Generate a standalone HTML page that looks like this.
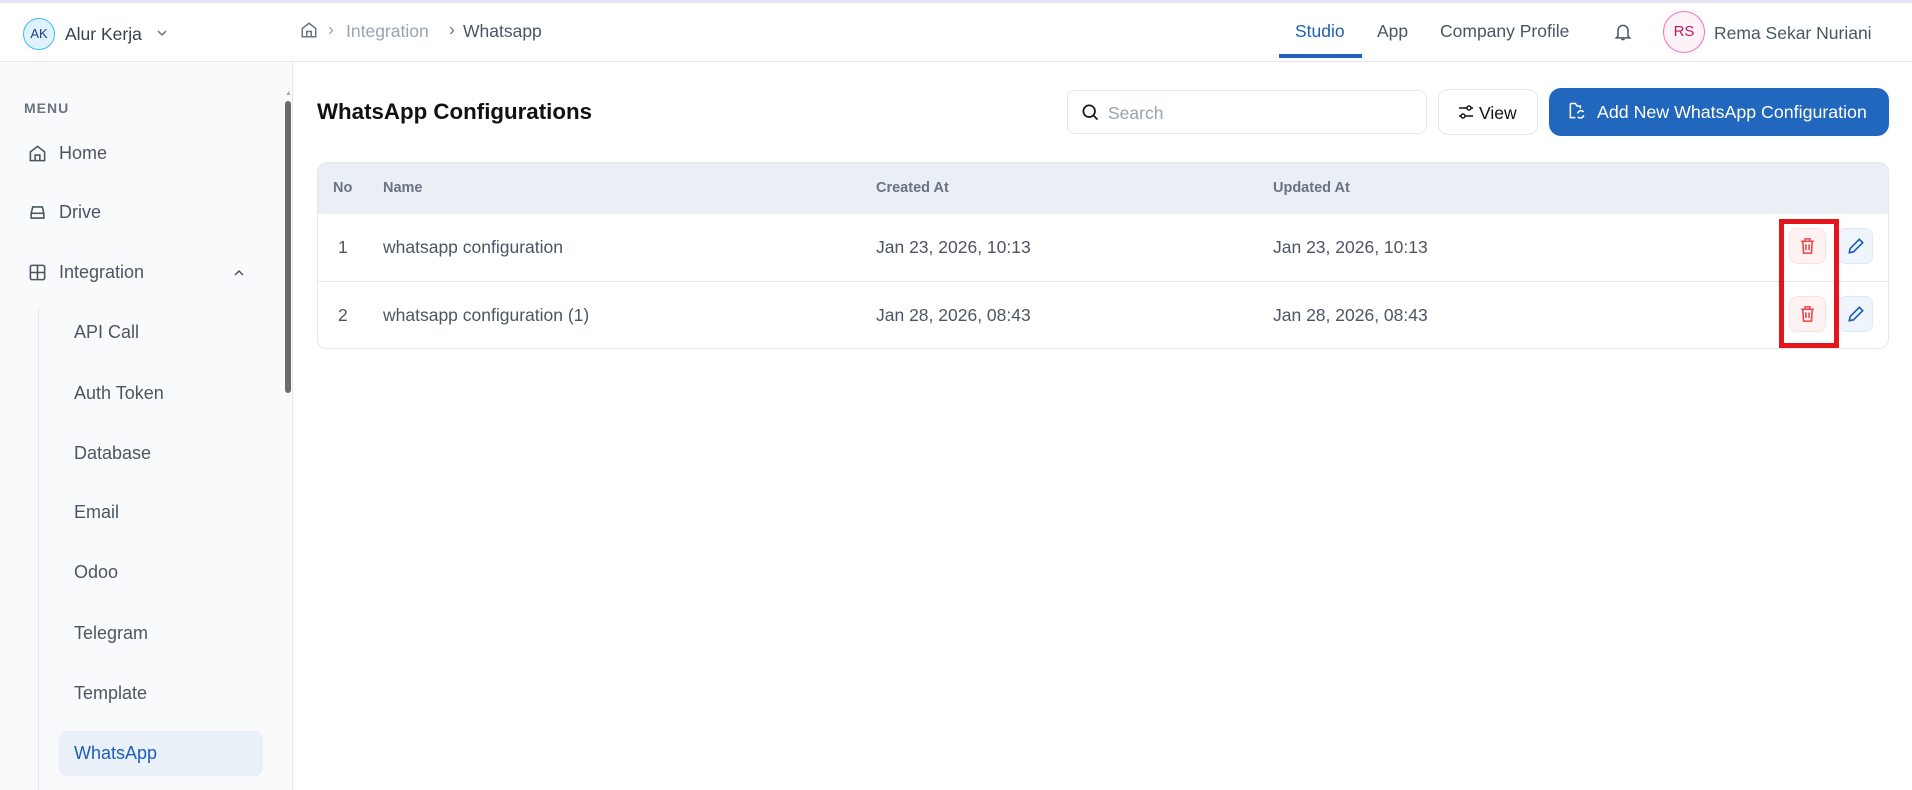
<!DOCTYPE html>
<html><head><meta charset="utf-8"><style>
*{box-sizing:border-box;margin:0;padding:0}
body{width:1912px;height:790px;overflow:hidden;background:#fff;font-family:"Liberation Sans",sans-serif;color:#4b5563;position:relative}
.a{position:absolute;white-space:nowrap}
.topline{position:absolute;left:0;top:0;width:1912px;height:3px;background:#e4e4f4}
.hdr{position:absolute;left:0;top:3px;width:1912px;height:59px;border-bottom:1px solid #e5e7eb}
.side{position:absolute;left:0;top:62px;width:293px;height:728px;background:#f9fafb;border-right:1px solid #e5e7eb}
.nav{font-size:18px;color:#4b5563}
.th{font-size:14.5px;font-weight:bold;color:#6b7280}
.td{font-size:17.5px;color:#4b5563}
.h{font-size:17.5px}
</style></head><body>
<div class="topline"></div>
<div class="hdr"></div>
<div class="a" style="left:23px;top:18px;width:32px;height:32px;border-radius:50%;border:1.5px solid #38bdf8;background:#e0f2fe;font-size:13px;color:#1e3a8a;text-align:center;line-height:29px">AK</div>
<div class="a h" style="left:65px;top:24px;color:#374151">Alur Kerja</div>
<svg class="a" style="left:156px;top:28px" width="12" height="10" viewBox="0 0 12 10"><path d="M2 3l4 4 4-4" fill="none" stroke="#6b7280" stroke-width="1.5"/></svg>
<svg class="a" style="left:300px;top:21px" width="18" height="18" viewBox="0 0 24 24" fill="none" stroke="#6b7280" stroke-width="2"><path d="M3 10l9-7 9 7v11H3z"/><path d="M9 21v-7h6v7"/></svg>
<div class="a h" style="left:328px;top:19px;color:#9ca3af">›</div>
<div class="a h" style="left:346px;top:21px;color:#9ca3af">Integration</div>
<div class="a h" style="left:449px;top:19px;color:#6b7280">›</div>
<div class="a h" style="left:463px;top:21px;color:#4b5563">Whatsapp</div>
<div class="a h" style="left:1295px;top:21px;color:#1d5fb8">Studio</div>
<div class="a" style="left:1279px;top:54px;width:83px;height:4px;background:#1f63bd"></div>
<div class="a h" style="left:1377px;top:21px;color:#4b5563">App</div>
<div class="a h" style="left:1440px;top:21px;color:#4b5563">Company Profile</div>
<svg class="a" style="left:1613px;top:22px" width="20" height="20" viewBox="0 0 24 24" fill="none" stroke="#4b5563" stroke-width="1.8"><path d="M6 17V10a6 6 0 0112 0v7l2 2H4z"/><path d="M10 21h4"/></svg>
<div class="a" style="left:1663px;top:11px;width:42px;height:42px;border-radius:50%;border:1.5px solid #f472b6;background:#fdf2f8;font-size:15px;color:#be185d;text-align:center;line-height:39px">RS</div>
<div class="a h" style="left:1714px;top:23px;color:#4b5563">Rema Sekar Nuriani</div>

<div class="side"></div>
<div class="a" style="left:285px;top:101px;width:6px;height:292px;border-radius:3px;background:#6b6b6b"></div>
<div class="a" style="left:285px;top:90px;font-size:7px;color:#aaa">▲</div>
<div class="a" style="left:24px;top:100px;font-size:14px;font-weight:bold;color:#6b7280;letter-spacing:1px">MENU</div>
<svg class="a" style="left:28px;top:144px" width="19" height="19" viewBox="0 0 24 24" fill="none" stroke="#4b5563" stroke-width="2"><path d="M3 10l9-7 9 7v11H3z"/><path d="M9 21v-7h6v7"/></svg>
<div class="a nav" style="left:59px;top:143px">Home</div>
<svg class="a" style="left:28px;top:203px" width="19" height="19" viewBox="0 0 24 24" fill="none" stroke="#4b5563" stroke-width="2"><path d="M4 13l2-8h12l2 8v6H4z"/><path d="M4 13h16"/></svg>
<div class="a nav" style="left:59px;top:202px">Drive</div>
<svg class="a" style="left:28px;top:263px" width="19" height="19" viewBox="0 0 24 24" fill="none" stroke="#4b5563" stroke-width="2"><rect x="3" y="3" width="18" height="18" rx="2"/><path d="M12 3v18M3 12h18"/></svg>
<div class="a nav" style="left:59px;top:262px">Integration</div>
<svg class="a" style="left:233px;top:268px" width="12" height="10" viewBox="0 0 12 10"><path d="M2 7l4-4 4 4" fill="none" stroke="#4b5563" stroke-width="1.5"/></svg>
<div class="a" style="left:38px;top:308px;width:1px;height:482px;background:#e5e7eb"></div>
<div class="a nav" style="left:74px;top:322px">API Call</div>
<div class="a nav" style="left:74px;top:383px">Auth Token</div>
<div class="a nav" style="left:74px;top:443px">Database</div>
<div class="a nav" style="left:74px;top:502px">Email</div>
<div class="a nav" style="left:74px;top:562px">Odoo</div>
<div class="a nav" style="left:74px;top:623px">Telegram</div>
<div class="a nav" style="left:74px;top:683px">Template</div>
<div class="a" style="left:59px;top:731px;width:204px;height:45px;border-radius:8px;background:#eaf0f8"></div>
<div class="a nav" style="left:74px;top:743px;color:#1d5fb8">WhatsApp</div>

<div class="a" style="left:317px;top:99px;font-size:22.3px;font-weight:bold;color:#111">WhatsApp Configurations</div>
<div class="a" style="left:1067px;top:90px;width:360px;height:44px;border:1px solid #e5e7eb;border-radius:8px"></div>
<svg class="a" style="left:1080px;top:102px" width="20" height="20" viewBox="0 0 24 24" fill="none" stroke="#111" stroke-width="2"><circle cx="11" cy="11" r="7"/><path d="M16 16l5 5"/></svg>
<div class="a h" style="left:1108px;top:103px;color:#9ca3af">Search</div>
<div class="a" style="left:1438px;top:89px;width:100px;height:46px;border:1px solid #e5e7eb;border-radius:10px"></div>
<svg class="a" style="left:1458px;top:104px" width="16" height="16" viewBox="0 0 16 16" fill="none" stroke="#111" stroke-width="1.4"><path d="M1 4h8M13 4h2M1 12h2M7 12h8"/><circle cx="11" cy="4" r="2"/><circle cx="5" cy="12" r="2"/></svg>
<div class="a h" style="left:1479px;top:103px;color:#111">View</div>
<div class="a" style="left:1549px;top:88px;width:340px;height:48px;border-radius:12px;background:#2167be"></div>
<svg class="a" style="left:1567px;top:101px" width="20" height="20" viewBox="0 0 24 24" fill="none" stroke="#fff" stroke-width="1.8"><path d="M4 3h6l2 3h4v3M4 3v17h6"/><path d="M13 15a4 4 0 017-2M20 17a4 4 0 01-7 2"/></svg>
<div class="a" style="left:1597px;top:102px;font-size:17.8px;color:#fff">Add New WhatsApp Configuration</div>

<div class="a" style="left:317px;top:162px;width:1572px;height:187px;border:1px solid #e5e7eb;border-radius:10px;overflow:hidden">
 <div style="height:51px;background:#eaeff6"></div>
 <div style="position:absolute;left:0;top:118px;width:100%;height:1px;background:#e5e7eb"></div>
</div>
<div class="a th" style="left:333px;top:180px">No</div>
<div class="a th" style="left:383px;top:180px">Name</div>
<div class="a th" style="left:876px;top:180px">Created At</div>
<div class="a th" style="left:1273px;top:180px">Updated At</div>
<div class="a td" style="left:338px;top:237px">1</div>
<div class="a td" style="left:383px;top:237px">whatsapp configuration</div>
<div class="a td" style="left:876px;top:237px">Jan 23, 2026, 10:13</div>
<div class="a td" style="left:1273px;top:237px">Jan 23, 2026, 10:13</div>
<div class="a td" style="left:338px;top:305px">2</div>
<div class="a td" style="left:383px;top:305px">whatsapp configuration (1)</div>
<div class="a td" style="left:876px;top:305px">Jan 28, 2026, 08:43</div>
<div class="a td" style="left:1273px;top:305px">Jan 28, 2026, 08:43</div>

<div class="a" style="left:1789px;top:228px;width:37px;height:36px;border-radius:8px;border:1px solid #fbe0e0;background:#fef2f2"></div>
<div class="a" style="left:1789px;top:296px;width:37px;height:36px;border-radius:8px;border:1px solid #fbe0e0;background:#fef2f2"></div>
<svg class="a" style="left:1798px;top:236px" width="19" height="20" viewBox="0 0 24 24" fill="none" stroke="#ef4444" stroke-width="2"><path d="M4 6h16M9 6V3h6v3M6 6l1 15h10l1-15M10 10v7M14 10v7"/></svg>
<svg class="a" style="left:1798px;top:304px" width="19" height="20" viewBox="0 0 24 24" fill="none" stroke="#ef4444" stroke-width="2"><path d="M4 6h16M9 6V3h6v3M6 6l1 15h10l1-15M10 10v7M14 10v7"/></svg>
<div class="a" style="left:1838px;top:228px;width:35px;height:36px;border-radius:8px;border:1px solid #dbe7f7;background:#eff5fd"></div>
<div class="a" style="left:1838px;top:296px;width:35px;height:36px;border-radius:8px;border:1px solid #dbe7f7;background:#eff5fd"></div>
<svg class="a" style="left:1846px;top:236px" width="20" height="20" viewBox="0 0 24 24" fill="none" stroke="#1d5fb8" stroke-width="2"><path d="M4 20l1-5L16 4l4 4L9 19z"/></svg>
<svg class="a" style="left:1846px;top:304px" width="20" height="20" viewBox="0 0 24 24" fill="none" stroke="#1d5fb8" stroke-width="2"><path d="M4 20l1-5L16 4l4 4L9 19z"/></svg>
<div class="a" style="left:1779px;top:219px;width:60px;height:129px;border:5px solid #e4151b"></div>
</body></html>
